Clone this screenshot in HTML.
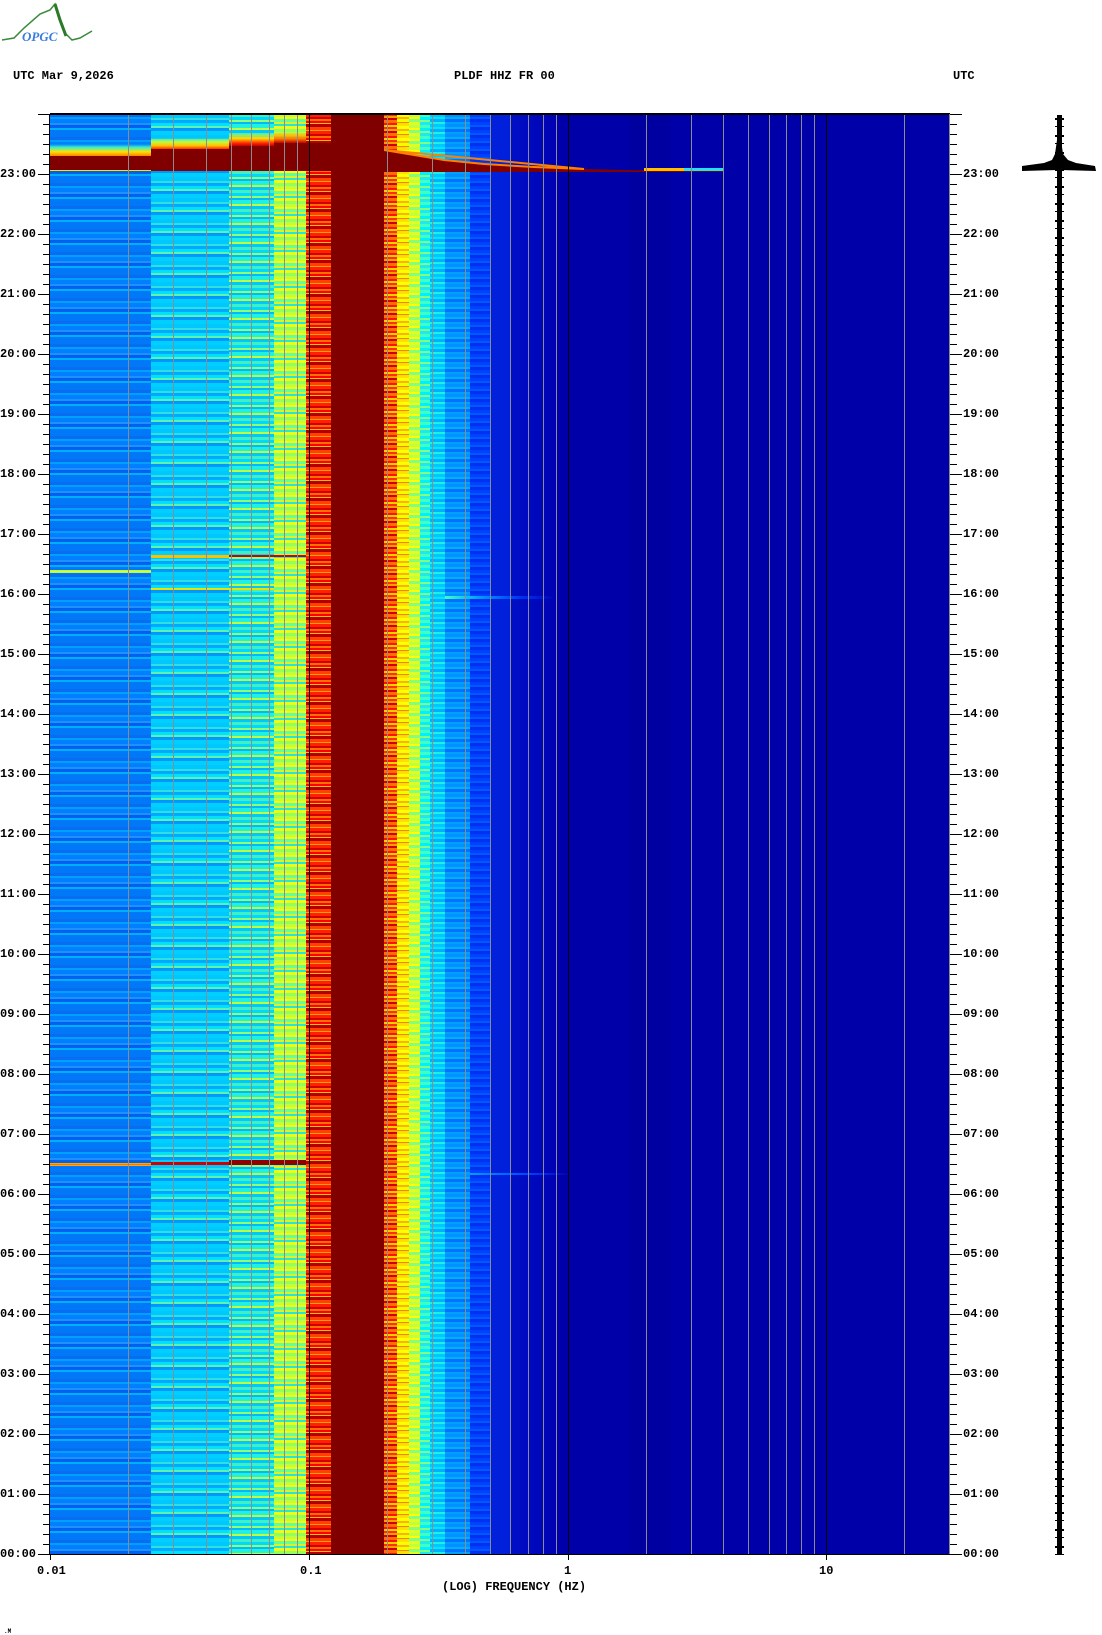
<!DOCTYPE html>
<html><head><meta charset="utf-8"><style>
*{margin:0;padding:0;box-sizing:border-box}
body{width:1102px;height:1634px;background:#fff;position:relative;overflow:hidden;font-family:"Liberation Mono",monospace;font-weight:bold;font-size:12px;color:#000}
.a{position:absolute}
.c{position:absolute;top:114px;height:1440px}
.g{position:absolute;top:114px;height:1440px;width:1px;background:#8c8c8c}
.k{position:absolute;top:114px;height:1440px;width:1px;background:#000}
.t{position:absolute;font-size:12px;line-height:12px}
.ev{position:absolute}
</style></head><body>
<svg class="a" style="left:0;top:0" width="100" height="45" viewBox="0 0 100 45">
<path d="M2 40 L14 38 L24 28 L40 14 L50 10 L55 4 L60 18 L66 34 L72 40 L80 38 L92 31" fill="none" stroke="#3a8a3a" stroke-width="1.5"/>
<path d="M55 4 L60 20 L66 36" fill="none" stroke="#2a7a2a" stroke-width="3"/>
<text x="22" y="41" font-family="Liberation Serif,serif" font-style="italic" font-size="13" fill="#3a7ae0">OPGC</text>
</svg>
<div class="t" style="left:13px;top:70px">UTC  Mar 9,2026</div>
<div class="t" style="left:454px;top:70px">PLDF HHZ FR 00</div>
<div class="t" style="left:953px;top:70px">UTC</div>

<div class="c" style="left:50px;width:101px;background:repeating-linear-gradient(#0a6cf0 0 3px,#00a0ff 3px 5px,#0080ff 5px 9px,#2090ff 9px 11px,#0060f0 11px 14px,#00b0ff 14px 16px,#0078f8 16px 23px)"></div>
<div class="c" style="left:151px;width:78px;background:repeating-linear-gradient(#00c8ff 0 4px,#30e0e0 4px 6px,#00a8ff 6px 9px,#00e0ff 9px 12px,#60f0b0 12px 14px,#0098ff 14px 17px,#00d0ff 17px 21px)"></div>
<div class="c" style="left:229px;width:45px;background:repeating-linear-gradient(#40f0c0 0 3px,#00d8ff 3px 6px,#90ff70 6px 8px,#00b8ff 8px 10px,#20f0e0 10px 14px,#c0ff40 14px 16px,#00c8ff 16px 19px)"></div>
<div class="c" style="left:274px;width:32px;background:repeating-linear-gradient(#c0ff40 0 3px,#ffff00 3px 5px,#60ffa0 5px 8px,#e0f020 8px 10px,#20e8e0 10px 12px,#f0ff10 12px 15px,#90ff60 15px 18px)"></div>
<div class="c" style="left:306px;width:25px;background:repeating-linear-gradient(#ff2000 0 3px,#d00000 3px 5px,#ff7000 5px 7px,#ff0000 7px 9px,#ffc000 9px 10px,#b00000 10px 13px,#ff4000 13px 16px,#ffa000 16px 17px)"></div>
<div class="c" style="left:331px;width:53px;background:#800000"></div>
<div class="c" style="left:384px;width:13px;background:repeating-linear-gradient(#ff3000 0 2px,#ffa000 2px 4px,#d00000 4px 6px,#ff7000 6px 9px,#ff1000 9px 11px,#ffd000 11px 13px)"></div>
<div class="c" style="left:397px;width:12px;background:repeating-linear-gradient(#ffff00 0 3px,#ffb000 3px 5px,#f0ff00 5px 8px,#ff8000 8px 9px,#ffe000 9px 12px)"></div>
<div class="c" style="left:409px;width:11px;background:repeating-linear-gradient(#c0ff40 0 3px,#ffff00 3px 5px,#80ff80 5px 8px,#e0ff20 8px 11px)"></div>
<div class="c" style="left:420px;width:10px;background:repeating-linear-gradient(#40ffc0 0 3px,#00f0ff 3px 6px,#80ff80 6px 8px,#20e8f0 8px 11px)"></div>
<div class="c" style="left:430px;width:15px;background:repeating-linear-gradient(#00c8ff 0 3px,#00e8ff 3px 5px,#00b0ff 5px 8px,#20f0e0 8px 10px)"></div>
<div class="c" style="left:445px;width:25px;background:repeating-linear-gradient(#0090ff 0 3px,#00b0ff 3px 5px,#0070ff 5px 8px,#00a0ff 8px 10px)"></div>
<div class="c" style="left:470px;width:20px;background:repeating-linear-gradient(#0040ff 0 3px,#0058ff 3px 5px,#0030f0 5px 8px)"></div>
<div class="c" style="left:490px;width:20px;background:#0020dc"></div>
<div class="c" style="left:510px;width:50px;background:linear-gradient(90deg,#0010c8,#0000b0)"></div>
<div class="c" style="left:560px;width:390px;background:#0000a8"></div>
<div class="c" style="left:630px;width:40px;background:#00009c;opacity:.6"></div>

<!-- top event -->
<div class="ev" style="left:50px;top:144px;width:101px;height:12px;background:linear-gradient(transparent,#40f0c0 30%,#ffe000 65%,#ff8000)"></div>
<div class="ev" style="left:151px;top:138px;width:78px;height:11px;background:linear-gradient(transparent,#c0ff40 35%,#ffc000 70%,#ff3000)"></div>
<div class="ev" style="left:229px;top:133px;width:45px;height:13px;background:linear-gradient(transparent,#ffe000 40%,#ff2000 80%,#c00000)"></div>
<div class="ev" style="left:274px;top:132px;width:32px;height:11px;background:linear-gradient(transparent,#ff8000 60%,#c00000)"></div>
<div class="ev" style="left:50px;top:156px;width:101px;height:15px;background:#800000"></div>
<div class="ev" style="left:50px;top:170px;width:101px;height:1px;background:#ffe000"></div>
<div class="ev" style="left:151px;top:149px;width:78px;height:22px;background:#800000"></div>
<div class="ev" style="left:229px;top:146px;width:45px;height:25px;background:#800000"></div>
<div class="ev" style="left:274px;top:143px;width:57px;height:28px;background:#800000"></div>
<svg class="a" style="left:384px;top:114px" width="360" height="60">
<polygon points="0,36 30,41 60,46 100,50 150,53 200,55 240,56 300,57 340,57 340,58 0,58" fill="#800000"/>
<polygon points="0,36 30,41 60,46 100,50 150,53 200,55" fill="none" stroke="#ff8000" stroke-width="2"/>
<rect x="260" y="54" width="70" height="3" fill="#ffc000"/>
<rect x="300" y="54" width="40" height="3" fill="#20e0ff"/>
</svg>

<div class="ev" style="left:50px;top:570px;width:101px;height:3px;background:linear-gradient(#80ff80,#ffff00,#80ff80)"></div>
<div class="ev" style="left:151px;top:555px;width:78px;height:3px;background:#ffc000"></div>
<div class="ev" style="left:229px;top:555px;width:77px;height:2px;background:#d00000"></div>
<div class="ev" style="left:151px;top:588px;width:123px;height:2px;background:#f0e000"></div>
<div class="ev" style="left:445px;top:596px;width:110px;height:3px;background:linear-gradient(90deg,#40ffc0,#00a0ff 30%,#0030f0 70%,transparent)"></div>
<div class="ev" style="left:50px;top:1163px;width:101px;height:3px;background:linear-gradient(#ffd000,#ff6000,#ffd000)"></div>
<div class="ev" style="left:151px;top:1162px;width:78px;height:3px;background:#d00000"></div>
<div class="ev" style="left:229px;top:1160px;width:77px;height:5px;background:#900000"></div>
<div class="ev" style="left:470px;top:1173px;width:100px;height:2px;background:linear-gradient(90deg,#00a0ff,#0040ff 60%,transparent)"></div>

<div class="g" style="left:128px"></div><div class="g" style="left:173px"></div><div class="g" style="left:206px"></div><div class="g" style="left:231px"></div><div class="g" style="left:251px"></div><div class="g" style="left:269px"></div><div class="g" style="left:284px"></div><div class="g" style="left:297px"></div>
<div class="k" style="left:309px"></div>
<div class="g" style="left:387px"></div><div class="g" style="left:432px"></div><div class="g" style="left:465px"></div><div class="g" style="left:490px"></div><div class="g" style="left:510px"></div><div class="g" style="left:528px"></div><div class="g" style="left:543px"></div><div class="g" style="left:556px"></div>
<div class="k" style="left:568px"></div>
<div class="g" style="left:646px"></div><div class="g" style="left:691px"></div><div class="g" style="left:723px"></div><div class="g" style="left:748px"></div><div class="g" style="left:769px"></div><div class="g" style="left:786px"></div><div class="g" style="left:801px"></div><div class="g" style="left:814px"></div>
<div class="k" style="left:826px"></div>
<div class="g" style="left:904px"></div>
<div class="a" style="left:50px;top:113px;width:900px;height:2px;background:#000"></div>
<div class="a" style="left:949px;top:114px;width:1px;height:1440px;background:#888"></div>
<div class="a" style="left:49px;top:114px;width:1px;height:1441px;background:#000"></div>
<div class="a" style="left:50px;top:1554px;width:900px;height:1px;background:#000"></div>

<div class="a" style="left:43px;top:114px;width:7px;height:1441px;background:repeating-linear-gradient(to top,#000 0 1px,transparent 1px 10px)"></div>
<div class="a" style="left:38px;top:114px;width:5px;height:1441px;background:repeating-linear-gradient(to top,#000 0 1px,transparent 1px 60px)"></div>
<div class="a" style="left:950px;top:114px;width:7px;height:1441px;background:repeating-linear-gradient(to top,#000 0 1px,transparent 1px 10px)"></div>
<div class="a" style="left:957px;top:114px;width:5px;height:1441px;background:repeating-linear-gradient(to top,#000 0 1px,transparent 1px 60px)"></div>
<div class="a" style="left:50px;top:1554px;width:1px;height:6px;background:#000"></div>
<div class="a" style="left:309px;top:1554px;width:1px;height:6px;background:#000"></div>
<div class="a" style="left:568px;top:1554px;width:1px;height:6px;background:#000"></div>
<div class="a" style="left:826px;top:1554px;width:1px;height:6px;background:#000"></div>

<div class="t" style="left:0;top:168px">23:00</div><div class="t" style="left:0;top:228px">22:00</div><div class="t" style="left:0;top:288px">21:00</div><div class="t" style="left:0;top:348px">20:00</div><div class="t" style="left:0;top:408px">19:00</div><div class="t" style="left:0;top:468px">18:00</div><div class="t" style="left:0;top:528px">17:00</div><div class="t" style="left:0;top:588px">16:00</div><div class="t" style="left:0;top:648px">15:00</div><div class="t" style="left:0;top:708px">14:00</div><div class="t" style="left:0;top:768px">13:00</div><div class="t" style="left:0;top:828px">12:00</div><div class="t" style="left:0;top:888px">11:00</div><div class="t" style="left:0;top:948px">10:00</div><div class="t" style="left:0;top:1008px">09:00</div><div class="t" style="left:0;top:1068px">08:00</div><div class="t" style="left:0;top:1128px">07:00</div><div class="t" style="left:0;top:1188px">06:00</div><div class="t" style="left:0;top:1248px">05:00</div><div class="t" style="left:0;top:1308px">04:00</div><div class="t" style="left:0;top:1368px">03:00</div><div class="t" style="left:0;top:1428px">02:00</div><div class="t" style="left:0;top:1488px">01:00</div><div class="t" style="left:0;top:1548px">00:00</div>
<div class="t" style="left:963px;top:168px">23:00</div><div class="t" style="left:963px;top:228px">22:00</div><div class="t" style="left:963px;top:288px">21:00</div><div class="t" style="left:963px;top:348px">20:00</div><div class="t" style="left:963px;top:408px">19:00</div><div class="t" style="left:963px;top:468px">18:00</div><div class="t" style="left:963px;top:528px">17:00</div><div class="t" style="left:963px;top:588px">16:00</div><div class="t" style="left:963px;top:648px">15:00</div><div class="t" style="left:963px;top:708px">14:00</div><div class="t" style="left:963px;top:768px">13:00</div><div class="t" style="left:963px;top:828px">12:00</div><div class="t" style="left:963px;top:888px">11:00</div><div class="t" style="left:963px;top:948px">10:00</div><div class="t" style="left:963px;top:1008px">09:00</div><div class="t" style="left:963px;top:1068px">08:00</div><div class="t" style="left:963px;top:1128px">07:00</div><div class="t" style="left:963px;top:1188px">06:00</div><div class="t" style="left:963px;top:1248px">05:00</div><div class="t" style="left:963px;top:1308px">04:00</div><div class="t" style="left:963px;top:1368px">03:00</div><div class="t" style="left:963px;top:1428px">02:00</div><div class="t" style="left:963px;top:1488px">01:00</div><div class="t" style="left:963px;top:1548px">00:00</div>

<div class="t" style="left:37px;top:1565px">0.01</div>
<div class="t" style="left:300px;top:1565px">0.1</div>
<div class="t" style="left:564px;top:1565px">1</div>
<div class="t" style="left:819px;top:1565px">10</div>
<div class="t" style="left:442px;top:1581px">(LOG) FREQUENCY (HZ)</div>
<div class="a" style="left:4px;top:1628px;font-size:6px">.M</div>

<div class="a" style="left:1057px;top:115px;width:5px;height:1440px;background:#000"></div>
<div class="a" style="left:1055px;top:115px;width:9px;height:1440px;background:repeating-linear-gradient(transparent 0 3px,#000 3px 5px,transparent 5px 11px,#000 11px 12px,transparent 12px 17px)"></div>
<svg class="a" style="left:1020px;top:110px" width="80" height="70">
<polygon points="37,30 41,30 43,44 48,50 56,53 75,56 76,61 41,60 37,60 2,61 2,56 24,53 32,50 35,44" fill="#000"/>
</svg>
</body></html>
